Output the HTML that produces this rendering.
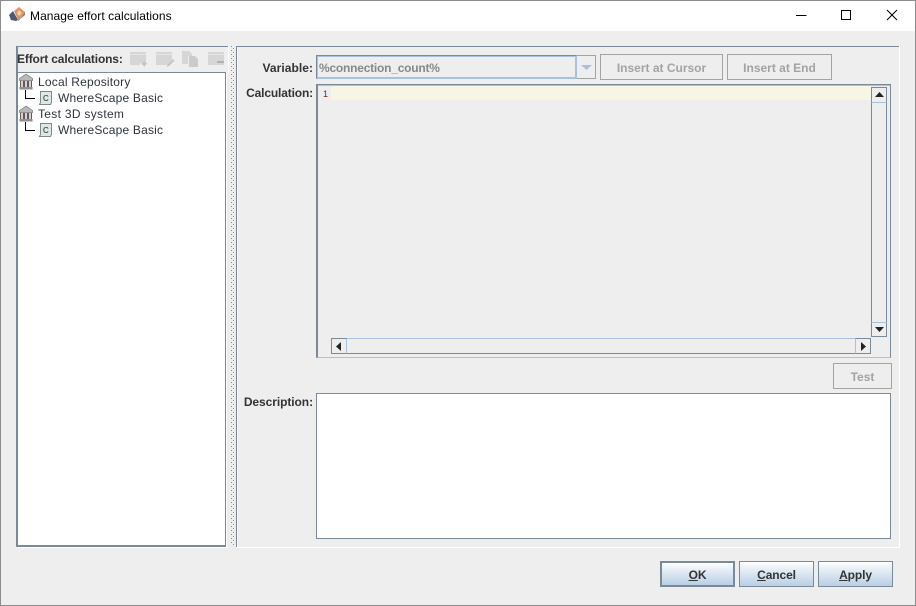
<!DOCTYPE html>
<html><head><meta charset="utf-8">
<style>
html,body{margin:0;padding:0;width:916px;height:606px;overflow:hidden;background:#eeeeee}
body{position:relative;font-family:"Liberation Sans",sans-serif;font-size:12px;color:#333}
.a{position:absolute;box-sizing:border-box}
.t{position:absolute;white-space:nowrap;line-height:14px}
.b{font-weight:bold;letter-spacing:-.15px}
.r{text-align:right}
.tree{color:#2f3340;letter-spacing:.2px}
.dis{position:absolute;box-sizing:border-box;border:1px solid #a3a3a3;font-weight:bold;color:#a3a3a3;text-align:center;line-height:26px;background:#eeeeee}
.btn{position:absolute;box-sizing:border-box;width:75px;height:26px;border:1px solid #7a8a99;font-weight:bold;color:#333;text-align:center;line-height:26px;letter-spacing:-.1px;background:linear-gradient(#ffffff 0%,#e6eef6 30%,#b9cfe5 100%)}
</style></head><body>
<!-- window frame -->
<div class="a" style="left:0;top:0;width:916px;height:606px;border:1px solid #8c8c8c"></div>
<div class="a" style="left:1px;top:1px;width:914px;height:30px;background:#fff"></div>
<svg class="a" style="left:8px;top:6px" width="18" height="17" viewBox="0 0 18 17">
<path d="M1 9 L5 5 L10 14 L8 15 L3 14Z" fill="#4a5a78"/>
<path d="M11 1 L17 6 L13 12 L10 14 L6 5Z" fill="#e2925a"/>
<path d="M11 4 L14 7 L11 10 L9 7Z" fill="#f2d3ae"/>
<path d="M17 6 L17 9 L10 15 L10 14 L13 12Z" fill="#5f7fa8"/>
</svg>
<div class="t" style="left:30px;top:9px;color:#000;letter-spacing:.07px">Manage effort calculations</div>
<svg class="a" style="left:790px;top:4px" width="120" height="24" viewBox="0 0 120 24" fill="none" stroke="#000" stroke-width="1" shape-rendering="crispEdges">
<path d="M6 11.500H16.500"/>
<rect x="51.500" y="6.500" width="9" height="9"/>
<path d="M97 6 L107 16 M107 6 L97 16" shape-rendering="auto"/>
</svg>

<!-- left panel -->
<div class="a" style="left:16px;top:46px;width:212px;height:1px;background:#7a8a99"></div>
<div class="a" style="left:228px;top:46px;width:1px;height:27px;background:#fff"></div>
<div class="a" style="left:16px;top:46px;width:2px;height:501px;background:#7a8a99"></div>
<div class="a" style="left:16px;top:547px;width:212px;height:1px;background:#fff"></div>
<div class="t b" style="left:17px;top:52px">Effort calculations:</div>
<svg class="a" style="left:129px;top:50px" width="98" height="18" viewBox="0 0 98 18">
<g fill="#d6d6d6">
<path d="M1 2H17V15H13V13H11V15H1Z"/><path d="M12.500 13H14.500V11H16V13H18V14.500H16V16.500H14.500V14.500H12.500Z" fill="#c4c4c4"/>
<path d="M27 2H43V10L38 15H27Z"/><path d="M44 9L45.500 10.500L40 16L37.500 16.800L38.500 14.500Z" fill="#c4c4c4"/>
<path d="M53 1H60L63 4V6H59V14H53Z"/><path d="M60 6H66L69 9V17H60Z" fill="#cbcbcb"/>
<path d="M79 2H95V15H79Z"/><path d="M88 11H95V13H88Z" fill="#b0b0b0"/>
</g>
<path d="M1 4.500H17M27 4.500H43M79 4.500H95" stroke="#e6e6e6" stroke-width="1"/>
</svg>
<div class="a" style="left:18px;top:72px;width:208px;height:475px;background:#fff;border-top:1px solid #7a8a99;border-bottom:2px solid #7a8a99"></div>
<div class="a" style="left:225px;top:72px;width:1px;height:475px;background:#7a8a99"></div>
<div class="a" style="left:226px;top:73px;width:1px;height:474px;background:#fff"></div>

<!-- tree connectors -->
<div class="a" style="left:25px;top:90px;width:1px;height:9px;background:#000"></div>
<div class="a" style="left:25px;top:98px;width:10px;height:1px;background:#000"></div>
<div class="a" style="left:25px;top:122px;width:1px;height:9px;background:#000"></div>
<div class="a" style="left:25px;top:130px;width:10px;height:1px;background:#000"></div>
<!-- bank icons -->
<svg class="a" style="left:18px;top:73px" width="16" height="17" viewBox="0 0 16 17">
<path d="M8 1L14.500 5.500V7.500H1.500V5.500Z" fill="#b8b8b8" stroke="#777" stroke-width=".7"/>
<rect x="1.500" y="14" width="13" height="2.500" fill="#8f8f8f"/>
<rect x="2" y="8" width="12" height="6" fill="#6a5552"/>
<path d="M3 8h2v6H3zM7 8h2v6H7zM11 8h2v6h-2z" fill="#d4d4d4"/>
</svg>
<svg class="a" style="left:18px;top:105px" width="16" height="17" viewBox="0 0 16 17">
<path d="M8 1L14.500 5.500V7.500H1.500V5.500Z" fill="#b8b8b8" stroke="#777" stroke-width=".7"/>
<rect x="1.500" y="14" width="13" height="2.500" fill="#8f8f8f"/>
<rect x="2" y="8" width="12" height="6" fill="#6a5552"/>
<path d="M3 8h2v6H3zM7 8h2v6H7zM11 8h2v6h-2z" fill="#d4d4d4"/>
</svg>
<!-- C doc icons -->
<svg class="a" style="left:38px;top:90px" width="15" height="16" viewBox="0 0 15 16">
<path d="M2.500 1.500H13.500V12.500L12.500 14.500H1.500L2.500 12.500Z" fill="#dde8e6" stroke="#7d8a88"/>
<text x="5" y="11" font-family="Liberation Sans" font-size="8" fill="#222">C</text>
</svg>
<svg class="a" style="left:38px;top:122px" width="15" height="16" viewBox="0 0 15 16">
<path d="M2.500 1.500H13.500V12.500L12.500 14.500H1.500L2.500 12.500Z" fill="#dde8e6" stroke="#7d8a88"/>
<text x="5" y="11" font-family="Liberation Sans" font-size="8" fill="#222">C</text>
</svg>
<div class="t tree" style="left:38px;top:75px">Local Repository</div>
<div class="t tree" style="left:58px;top:91px">WhereScape Basic</div>
<div class="t tree" style="left:38px;top:107px;letter-spacing:.3px">Test 3D system</div>
<div class="t tree" style="left:58px;top:123px">WhereScape Basic</div>

<!-- splitter dots -->
<svg class="a" style="left:230px;top:46px" width="5" height="500">
<defs><pattern id="d" width="4" height="4" patternUnits="userSpaceOnUse"><rect x="1" y="0" width="1" height="1" fill="#8f8f8f"/><rect x="3" y="2" width="1" height="1" fill="#8f8f8f"/></pattern></defs>
<rect width="5" height="500" fill="url(#d)"/>
</svg>

<!-- right panel -->
<div class="a" style="left:236px;top:46px;width:663px;height:1px;background:#7a8a99"></div>
<div class="a" style="left:236px;top:46px;width:1px;height:501px;background:#7a8a99"></div>
<div class="a" style="left:237px;top:47px;width:1px;height:500px;background:#fff"></div>
<div class="a" style="left:899px;top:46px;width:1px;height:502px;background:#fff"></div>
<div class="a" style="left:236px;top:547px;width:664px;height:1px;background:#fff"></div>

<div class="t b r" style="left:240px;top:61px;width:73px;letter-spacing:.05px">Variable:</div>
<div class="a" style="left:316px;top:55px;width:261px;height:24px;border:1px solid #7a8a99;border-right-color:#a9c1dc;border-bottom-color:#a9c1dc;box-shadow:inset 1px 1px 0 #a9c1dc, inset -1px -1px 0 #a9c1dc;background:#eeeeee"></div>
<div class="t b" style="left:319px;top:61px;color:#888;letter-spacing:-.22px">%connection_count%</div>
<div class="a" style="left:577px;top:55px;width:19px;height:24px;border:1px solid #a3a3a3;border-left:0;background:#eeeeee"></div>
<svg class="a" style="left:580px;top:65px" width="14" height="6"><path d="M1 0H12L6.500 5Z" fill="#a9c1dc"/></svg>
<div class="dis" style="left:600px;top:54px;width:123px;height:26px">Insert at Cursor</div>
<div class="dis" style="left:727px;top:54px;width:105px;height:26px">Insert at End</div>

<div class="t b r" style="left:240px;top:86px;width:73px">Calculation:</div>
<div class="a" style="left:316px;top:84px;width:575px;height:274px;border:1px solid #7a8a99;border-left-width:2px;border-right-color:#7a8a99;border-bottom-color:#a9c1dc;box-shadow:inset 0 1px 0 #a9c1dc;background:#eeeeee"></div>
<div class="a" style="left:331px;top:86px;width:540px;height:14px;background:#f7f5e3"></div>
<div class="t" style="left:323px;top:87px;font-size:9px;color:#7a2020">1</div>

<!-- vertical scrollbar -->
<div class="a" style="left:871px;top:87px;width:16px;height:250px;border:1px solid #7a8a99;background:#eeeeee"></div>
<div class="a" style="left:871px;top:87px;width:16px;height:16px;border:1px solid #7a8a99;border-bottom-color:#a9c1dc;background:#eeeeee"></div>
<svg class="a" style="left:875px;top:92px" width="10" height="6"><path d="M4.500 0L9 5H0Z" fill="#222"/></svg>
<div class="a" style="left:871px;top:322px;width:16px;height:15px;border:1px solid #7a8a99;border-top-color:#a9c1dc;background:#eeeeee"></div>
<svg class="a" style="left:875px;top:327px" width="10" height="6"><path d="M0 0H9L4.500 5Z" fill="#222"/></svg>
<!-- horizontal scrollbar -->
<div class="a" style="left:331px;top:338px;width:540px;height:16px;border:1px solid #7a8a99;border-top-color:#a9c1dc;background:#eeeeee"></div>
<div class="a" style="left:331px;top:338px;width:16px;height:16px;border:1px solid #7a8a99;border-right-color:#a9c1dc;background:#eeeeee"></div>
<svg class="a" style="left:336px;top:342px" width="6" height="9"><path d="M5 0V9L0 4.500Z" fill="#222"/></svg>
<div class="a" style="left:855px;top:338px;width:16px;height:16px;border:1px solid #7a8a99;border-left-color:#a9c1dc;background:#eeeeee"></div>
<svg class="a" style="left:861px;top:342px" width="6" height="9"><path d="M0 0V9L5 4.500Z" fill="#222"/></svg>

<div class="dis" style="left:833px;top:363px;width:59px;height:26px">Test</div>

<div class="t b r" style="left:240px;top:395px;width:73px;letter-spacing:-.07px">Description:</div>
<div class="a" style="left:316px;top:393px;width:575px;height:146px;background:#fff;border:1px solid #7a8a99"></div>

<!-- bottom buttons -->
<div class="btn" style="left:660px;top:561px;border-width:2px;line-height:24px"><u>O</u>K</div>
<div class="btn" style="left:739px;top:561px"><u>C</u>ancel</div>
<div class="btn" style="left:818px;top:561px"><u>A</u>pply</div>
</body></html>
